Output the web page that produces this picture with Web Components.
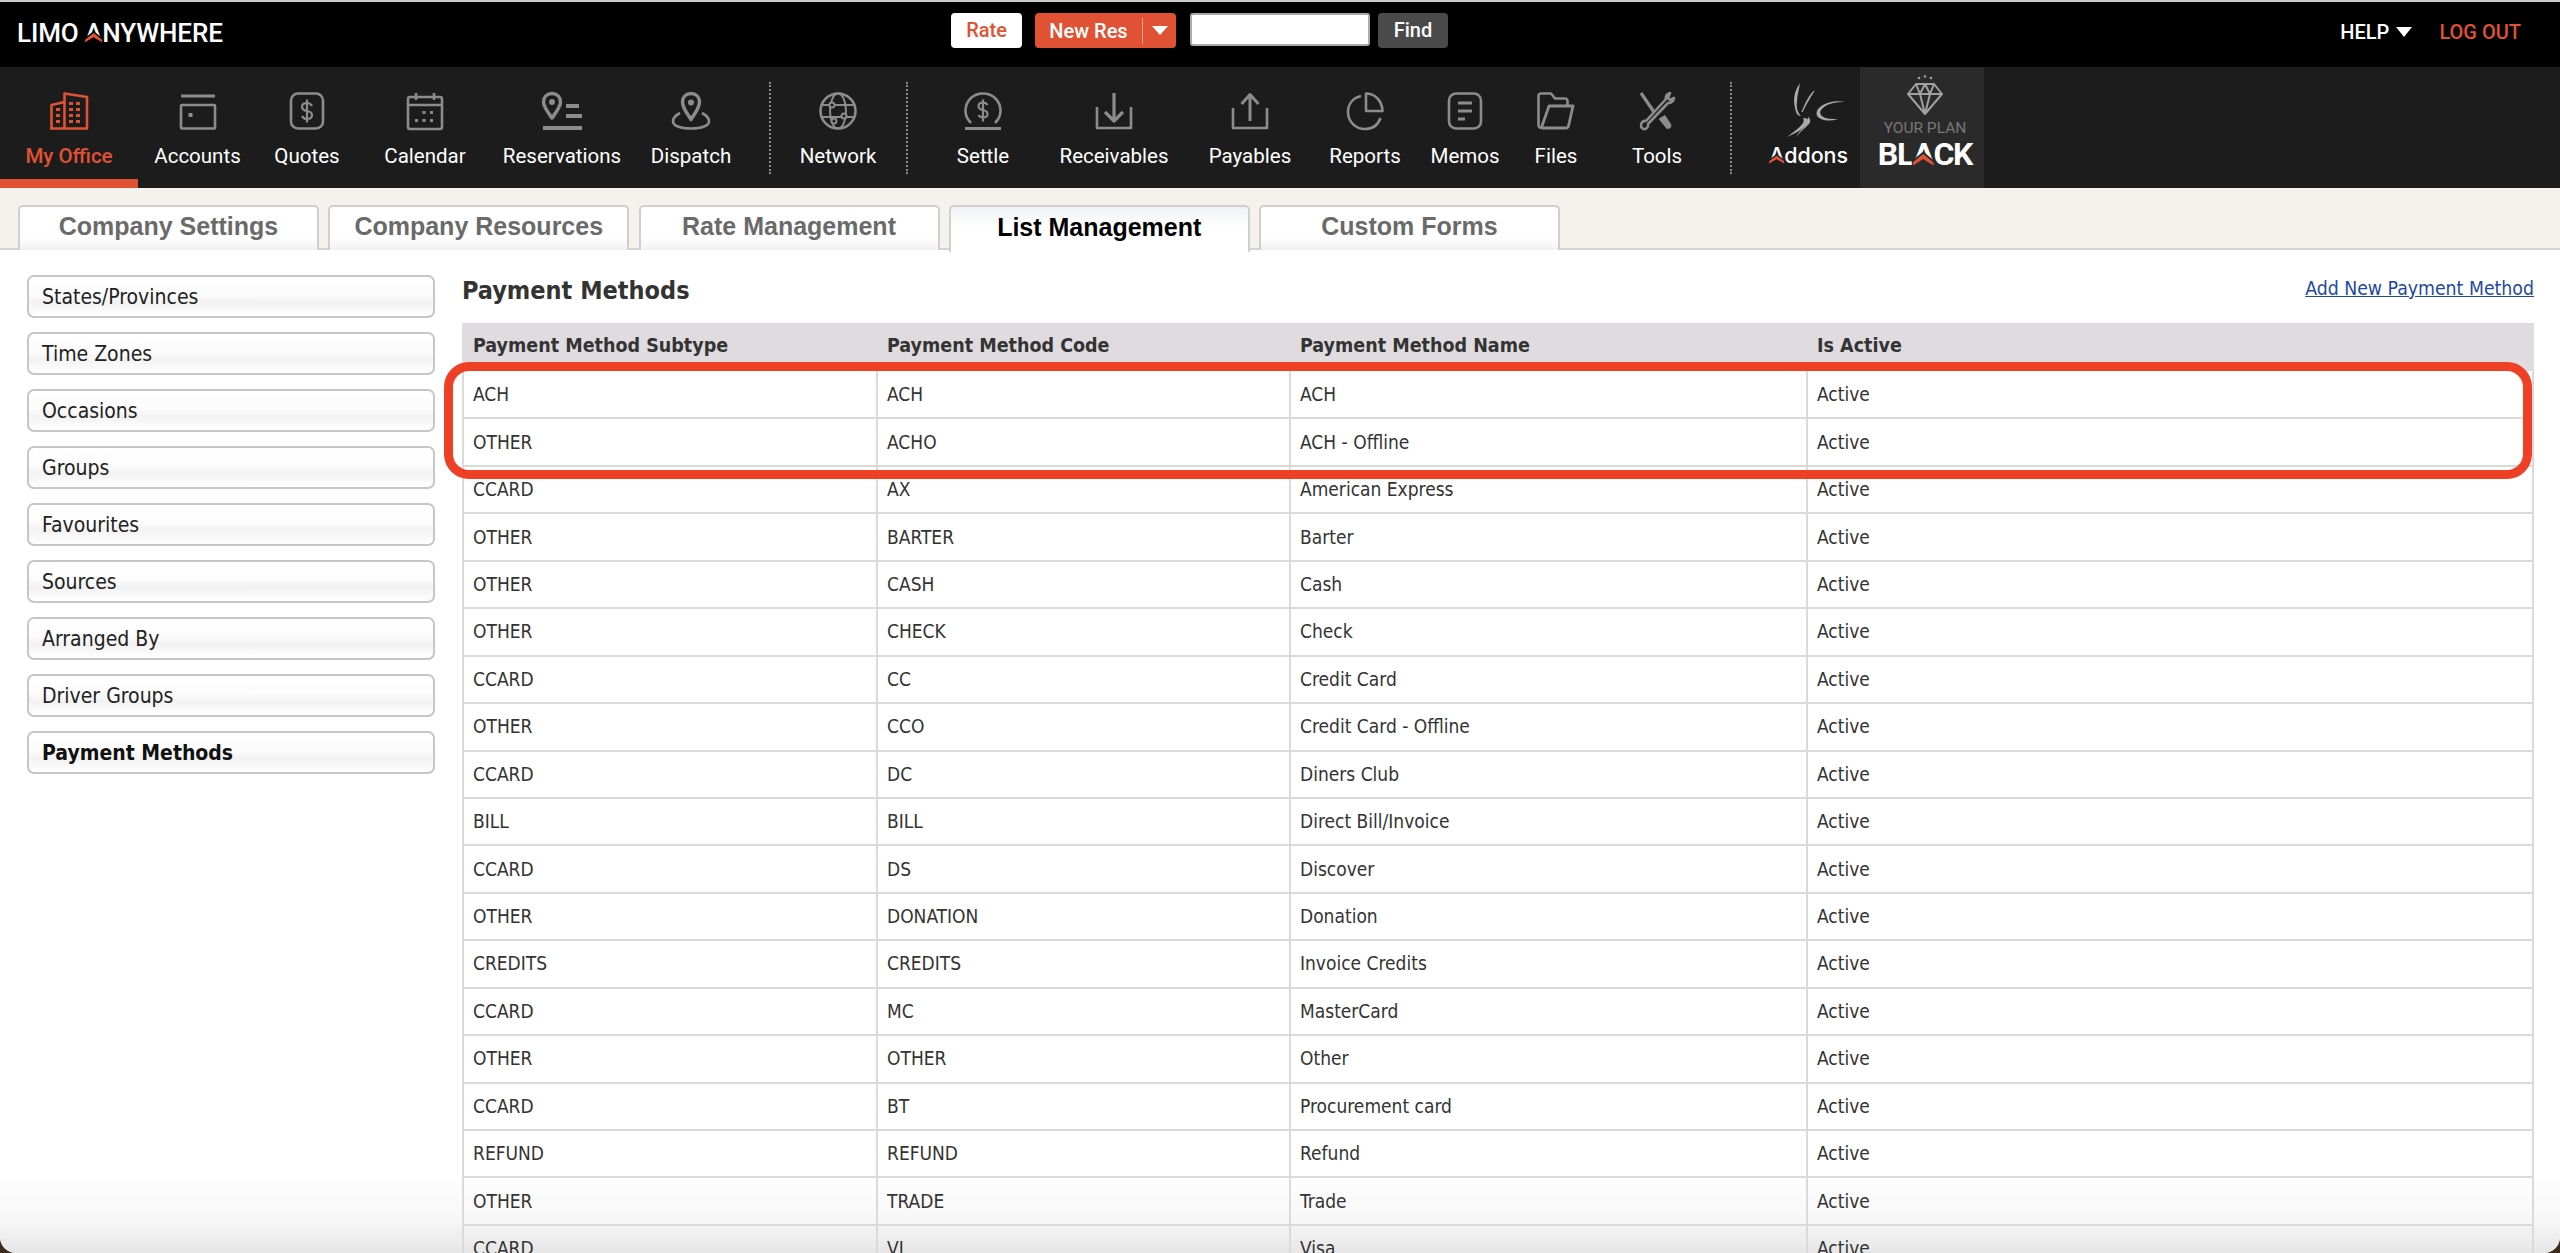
<!DOCTYPE html>
<html lang="en"><head><meta charset="utf-8"><title>Payment Methods</title>
<style>
html,body{margin:0;height:100%;overflow:hidden;background:#3f2a1e}
body{font-family:"DejaVu Sans",sans-serif}
</style></head><body>
<la-app></la-app>
<script>
const def=(n,html,init)=>customElements.define(n,class extends HTMLElement{
  constructor(){super();this.attachShadow({mode:'open'}).innerHTML=html;}
  connectedCallback(){if(init)init.call(this,this.shadowRoot);}
});
const ICONS={
office:`<path d="M1.5 36.5V13l13-3M14.5 36.5V1.5L37 5v31.5M0 36.5h38"/><g fill="currentColor" stroke="none"><rect x="6" y="16" width="4" height="3"/><rect x="6" y="22" width="4" height="3"/><rect x="6" y="28" width="4" height="3"/><rect x="19" y="10" width="4" height="3"/><rect x="26" y="10" width="4" height="3"/><rect x="19" y="16" width="4" height="3"/><rect x="26" y="16" width="4" height="3"/><rect x="19" y="22" width="4" height="3"/><rect x="26" y="22" width="4" height="3"/><rect x="19" y="28" width="4" height="3"/><rect x="26" y="28" width="4" height="3"/></g>`,
accounts:`<path d="M2 4h34" stroke-width="3"/><rect x="2" y="13" width="34" height="23.5" rx="1"/><rect x="9.500" y="21" width="4" height="4" fill="currentColor" stroke="none"/>`,
quotes:`<rect x="3" y="1.500" width="32" height="35" rx="7"/><path d="M24 14c-1-2-3-3-5-3-3 0-5 1.500-5 4s2 3.500 5 4 5 1.500 5 4-2 4-5 4c-2 0-4-1-5-3M19 7.500v23" stroke-width="2.200"/>`,
calendar:`<rect x="2" y="5" width="34" height="32" rx="2"/><path d="M2 13h34M10 1v7M28 1v7"/><g fill="currentColor" stroke="none"><rect x="16.500" y="19" width="3" height="3"/><rect x="24" y="19" width="3" height="3"/><rect x="9" y="27" width="3" height="3"/><rect x="16.500" y="27" width="3" height="3"/><rect x="24" y="27" width="3" height="3"/></g>`,
reservations:`<path d="M10 1.500c-5 0-8.500 3.500-8.500 8.500 0 5 5 11 8.500 16 3.500-5 8.500-11 8.500-16 0-5-3.500-8.500-8.500-8.500z" stroke-width="3.500"/><circle cx="10" cy="10" r="3" fill="currentColor" stroke="none"/><path d="M24 14h13M24 24h16M1 36h39" stroke-width="4"/>`,
dispatch:`<path d="M20 1.500c-5 0-8.500 3.500-8.500 8.500 0 6 5 12 8.500 17.500 3.500-5.500 8.500-11.500 8.500-17.500 0-5-3.500-8.500-8.500-8.500z" stroke-width="3.500"/><circle cx="20" cy="10.500" r="3" fill="currentColor" stroke="none"/><path d="M9 21c-4 2-7 5-7 8.500 0 4 7 7 18 7s18-3 18-7c0-3.500-3-6.500-7-8.500"/>`,
network:`<circle cx="19" cy="19" r="17.500"/><ellipse cx="19" cy="19" rx="8" ry="17.500" stroke-width="2"/><path d="M2 13h34M2 25h34" stroke-width="2"/><circle cx="13" cy="13" r="2.500" fill="#1c1c1c" stroke-width="2"/><circle cx="25" cy="24" r="2.500" fill="#1c1c1c" stroke-width="2"/><circle cx="15" cy="29" r="2.500" fill="#1c1c1c" stroke-width="2"/>`,
settle:`<path d="M7 31C3.500 27.500 1.500 23.500 1.500 19 1.500 9 9 1.500 19 1.500S36.500 9 36.500 19c0 4.500-2 8.500-5.500 12"/><path d="M23.500 13c-1-1.800-2.500-2.500-4.500-2.500-2.700 0-4.500 1.300-4.500 3.700s2 3.300 4.500 3.800 4.500 1.500 4.500 3.800-2 3.700-4.500 3.700c-2 0-3.500-.8-4.500-2.500M19 7.500v22"  stroke-width="2.200"/><path d="M1 36.500h36" stroke-width="3"/>`,
receivables:`<path d="M2 15v21h34V15"/><path d="M19 1v27M10 20l9 9 9-9" stroke-width="3.200"/>`,
payables:`<path d="M2 16v20h34V16"/><path d="M19 29V3M10.500 12L19 2.500 27.500 12" stroke-width="3"/>`,
reports:`<path d="M15 4C7 6 2 12 2 20c0 9.500 7.500 17 17 17 7.500 0 13-4 15.500-11"/><path d="M20 1.500c8 0 16 6 16.500 17.500H20z"/>`,
memos:`<rect x="3" y="1.500" width="32" height="35" rx="7"/><path d="M12 11h14M12 19h14M12 27h7" stroke-width="3"/>`,
files:`<path d="M5 36c-2 0-3.500-1-3.500-3V4c0-1.500 1-2.500 2.500-2.500h10l4 5h10c1.500 0 2.500 1 2.500 2.500v4"/><path d="M4.500 35.500 12 14h24l-4.500 20c-.3 1.300-1 2-2.500 2H5" stroke-width="2.800"/>`,
tools:`<path d="M3 1 16 20M22 26l8 10" stroke-width="3.200"/><path d="M22 26l5-3 6 9c1 2 0 4-1.500 4.500-1.500.7-3 0-4-1.500z" fill="currentColor" stroke="none"/><path d="M32 1c-3 .5-4.500 3-4 6L8 29c-3-.5-5 1.500-5 4.500 0 2.500 2 4 4 3.500s3.500-2.500 3-5L30 11c3 .5 5.500-2 6-5l-4 2-2-2z" stroke-width="2.600"/>`
};
def('la-brand-a',`<style>
:host{display:inline-block;position:relative;line-height:1}
svg{position:absolute;left:0;top:0;width:100%;height:1em;overflow:visible}
</style><slot></slot><svg viewBox="0 0 100 100" preserveAspectRatio="none"><polygon fill="var(--brand-bg,#000)" points="-6,92 -6,72 50,42 106,72 106,92"/><polygon fill="#e05233" points="0,86 0,76 50,50 100,76 100,86 50,66"/></svg>`);
def('la-logo',`<style>
:host{display:block;font:500 26px/1 Roboto,sans-serif;color:#fff;letter-spacing:-.1px;white-space:nowrap}
</style>LIMO&nbsp;<la-brand-a style="--brand-bg:#000">A</la-brand-a>NYWHERE`);
def('la-top-actions',`<style>
:host{display:flex;align-items:flex-start;font:500 20px/35px Roboto,sans-serif}
.b{height:35px;border-radius:4px;display:flex;align-items:center;justify-content:center;box-sizing:border-box}
.rate{width:71px;background:#fff;color:#e05233}
.new{width:141px;margin-left:13px;background:#e05233;color:#fff;}
.new span{width:108px;text-align:center;border-right:1px solid #f0a08e;height:26px;line-height:26px;box-sizing:border-box}
.new i{flex:1;display:flex;justify-content:center}
.tri{width:0;height:0;border:8px solid transparent;border-top:9px solid #fff;border-bottom:0}
.in{display:block;width:180px;height:33px;margin-left:14px;background:#fff;border:2px solid #aaa;border-radius:3px;box-sizing:border-box;padding:0}
.find{width:70px;margin-left:8px;background:#4a4a4a;color:#fff}
</style><div class="b rate">Rate</div><div class="b new"><span>New Res</span><i><b class="tri"></b></i></div><input class="in" aria-label="Find"><div class="b find">Find</div>`);
def('la-top-links',`<style>
:host{display:flex;align-items:center;font:500 20px/1 Roboto,sans-serif;color:#fff;white-space:nowrap}
.tri{width:0;height:0;border:8.500px solid transparent;border-top:10px solid #fff;border-bottom:0;margin-left:7px}
.out{color:#e05233;margin-left:27px}
</style>HELP<span class="tri"></span><span class="out">LOG OUT</span>`);
def('la-topbar',`<style>
:host{display:grid;grid-template-columns:951px 1fr auto;height:65px;background:#000;border-top:2px solid #c9c9c9;box-sizing:content-box}
.l{padding:18px 0 0 17px}.c{padding-top:11px}.r{padding:20px 39px 0 0}
</style><div class="l"><la-logo></la-logo></div><div class="c"><la-top-actions></la-top-actions></div><div class="r"><la-top-links></la-top-links></div>`);
customElements.define('la-nav-item',class extends HTMLElement{
  constructor(){super();this.attachShadow({mode:'open'});}
  connectedCallback(){
    const w=this.getAttribute('w'),ic=this.getAttribute('icon'),vw=this.getAttribute('vw')||38;
    const active=this.hasAttribute('active');
    this.shadowRoot.innerHTML=`<style>
:host{display:flex;flex-direction:column;align-items:center;box-sizing:border-box;height:121px;width:${w}px;padding-top:25px;color:#8c8c8c;position:relative}
svg{width:${vw}px;height:38px;display:block;fill:none;stroke:currentColor;stroke-width:2.600;stroke-linejoin:round;stroke-linecap:butt;overflow:visible}
.t{margin-top:15px;font:400 20.500px/23px Roboto,sans-serif;color:#fff;white-space:nowrap}
:host([active]){color:#e05233}:host([active]) .t{color:#e05233;font-weight:500}
.bar{position:absolute;left:0;right:0;bottom:0;height:9px;background:#e05233;display:${active?'block':'none'}}
</style><svg viewBox="0 0 ${vw} 38">${ICONS[ic]}</svg><div class="t"><slot></slot></div><div class="bar"></div>`;
  }
});
customElements.define('la-nav-sep',class extends HTMLElement{
  constructor(){super();this.attachShadow({mode:'open'});}
  connectedCallback(){this.shadowRoot.innerHTML=`<style>
:host{display:flex;justify-content:center;align-items:flex-start;width:${this.getAttribute('w')}px;height:121px;padding-top:15px;box-sizing:border-box}
i{display:block;width:0;height:92px;border-left:2px dotted #8a8a8a}
</style><i></i>`;}
});
def('la-addons',`<style>
:host{display:flex;flex-direction:column;align-items:center;width:111px;height:121px;box-sizing:border-box;padding:16px 0 0 8px;color:#aaa}
svg{width:58px;height:54px;display:block;margin-left:14px}
.t{font:500 21.500px/24px Inter,sans-serif;color:#fff;margin-top:6px;--brand-bg:#1c1c1c;letter-spacing:-.1px}
</style><svg viewBox="0 0 58 54"><g fill="currentColor"><path d="M13 0C6 10 6 18 9 29c1 3 3 4 5 4-3-3-5-8-4-14 0-6 2-12 3-19z"/><path d="M27 8c-5 5-8 11-12 21 3-6 7-13 12-21z" stroke="currentColor" stroke-width="1"/><path d="M58 19c-9-2-20 0-26 6-4 4-3 9 2 11 5 2 11 2 17 0-6 0-13 0-16-3-3-3-2-6 2-9 5-4 13-5 21-5z"/><path d="M16 35c4 0 6 1 5 4-2 4-7 9-21 15 6-5 13-9 16-14 1-2 1-4 0-5z"/><path d="M21 34c3 2 3 5 0 8-3 3-8 7-12 12 3-6 8-9 10-13 1-2 2-5 2-7z"/></g></svg><div class="t"><la-brand-a>A</la-brand-a>ddons</div>`);
def('la-plan',`<style>
:host{display:flex;flex-direction:column;align-items:center;width:124px;height:121px;box-sizing:border-box;background:#2a2a2a;padding:8px 0 0 6px;color:#a0a0a0}
svg{width:36px;height:40px;display:block;fill:none;stroke:currentColor;stroke-width:2;stroke-linejoin:round}
.y{font:400 15.500px/16px Roboto,sans-serif;color:#777;margin-top:5px;white-space:nowrap}
.b{font:700 32px/34px Roboto,sans-serif;color:#fff;margin-top:1px;letter-spacing:-1.2px;--brand-bg:#2a2a2a;white-space:nowrap}
</style><svg viewBox="0 0 36 40"><g fill="currentColor" stroke="none"><circle cx="12" cy="3" r="1.300"/><circle cx="18" cy="1.500" r="1.300"/><circle cx="24" cy="3" r="1.300"/></g><path d="M9 9h18l8 10-17 20L1 19zM1 19h34M9 9l4 10 5 20 5-20 4-10M13 19l5-10 5 10"/></svg><div class="y">YOUR PLAN</div><div class="b">BL<la-brand-a>A</la-brand-a>CK</div>`);
def('la-nav',`<style>
:host{display:flex;height:121px;background:#1c1c1c;box-shadow:0 1px 2px rgba(0,0,0,.45);position:relative}
</style><slot></slot>`);
customElements.define('la-tab',class extends HTMLElement{
  constructor(){super();this.attachShadow({mode:'open'}).innerHTML=`<style>
:host{display:flex;align-items:center;justify-content:center;box-sizing:border-box;width:301px;height:45px;margin-bottom:-1px;border:2px solid #cfcfcf;border-bottom:0;border-radius:5px 5px 0 0;background:linear-gradient(#fff 0,#fff 70%,#f1f1f1 100%);font:700 25px/1 "Liberation Sans",sans-serif;color:#6a6a6a;padding-bottom:4px;white-space:nowrap}
:host([active]){color:#000;background:linear-gradient(#f0f2f3,#fff 45%);height:47px;margin-bottom:-2px;position:relative;z-index:1}
</style><slot></slot>`;}
});
def('la-tabs',`<style>
:host{display:flex;gap:9.250px;height:62px;box-sizing:border-box;padding:17px 0 0 18px;background:#f5f2ed;border-bottom:2px solid #d4d4d4;position:relative}
::slotted(la-tab){align-self:flex-start}
</style><slot></slot>`);
customElements.define('la-side-item',class extends HTMLElement{
  constructor(){super();this.attachShadow({mode:'open'}).innerHTML=`<style>
:host{display:flex;align-items:center;box-sizing:border-box;height:43px;padding:1px 0 0 13px;border:2px solid #c6c6c6;border-radius:7px;background:linear-gradient(#fff 0,#fcfcfc 45%,#f2f2f2 65%,#fff 100%);font:400 21px/1 "DejaVu Sans",sans-serif;font-stretch:condensed;color:#222;white-space:nowrap}
:host([active]){font-weight:700;color:#111}
</style><slot></slot>`;}
});
def('la-side-menu',`<style>
:host{display:flex;flex-direction:column;gap:14px;width:408px;padding:25px 0 0 27px;margin-right:27px;flex:none}
</style><slot></slot>`);
customElements.define('la-method-table',class extends HTMLElement{
  constructor(){super();this.attachShadow({mode:'open'});}
  connectedCallback(){
    const rows=[['ACH','ACH','ACH'],['OTHER','ACHO','ACH - Offline'],['CCARD','AX','American Express'],['OTHER','BARTER','Barter'],['OTHER','CASH','Cash'],['OTHER','CHECK','Check'],['CCARD','CC','Credit Card'],['OTHER','CCO','Credit Card - Offline'],['CCARD','DC','Diners Club'],['BILL','BILL','Direct Bill/Invoice'],['CCARD','DS','Discover'],['OTHER','DONATION','Donation'],['CREDITS','CREDITS','Invoice Credits'],['CCARD','MC','MasterCard'],['OTHER','OTHER','Other'],['CCARD','BT','Procurement card'],['REFUND','REFUND','Refund'],['OTHER','TRADE','Trade'],['CCARD','VI','Visa']];
    const cell=c=>`<td>${c}</td>`;
    this.shadowRoot.innerHTML=`<style>
:host{display:block;position:relative;font:400 19px/1 "DejaVu Sans",sans-serif;font-stretch:condensed;color:#333}
table{width:2072px;table-layout:fixed;border-collapse:collapse;border:2px solid #dcdcdc;border-top:0}
col.a{width:414px}col.b{width:413px}col.c{width:517px}
th{height:48px;box-sizing:border-box;background:#dfdbdf;text-align:left;padding:0 0 3px 9px;font-weight:700;font-size:19.500px;color:#333;border-left:2px solid #dfdbdf}
td{height:47.450px;box-sizing:border-box;padding:0 0 0 9px;border:2px solid #dadada;border-top:0}
th,td{white-space:nowrap}
</style><table><colgroup><col class="a"><col class="b"><col class="c"><col></colgroup>
<thead><tr><th>Payment Method Subtype</th><th>Payment Method Code</th><th>Payment Method Name</th><th>Is Active</th></tr></thead>
<tbody>${rows.map(r=>`<tr>${r.map(cell).join('')}<td>Active</td></tr>`).join('')}</tbody></table><slot></slot>`;
  }
});
def('la-callout',`<style>
:host{position:absolute;left:-18px;top:39px;width:2088px;height:117px;box-sizing:border-box;border:9px solid #ee4025;border-radius:25px;pointer-events:none}
</style>`);
def('la-content-head',`<style>
:host{display:flex;justify-content:space-between;align-items:flex-start;height:47px;width:2072px;font-family:"DejaVu Sans",sans-serif;font-stretch:condensed}
h2{margin:0;font:700 25px/30px "DejaVu Sans",sans-serif;font-stretch:condensed;color:#333}
a{font-size:19.300px;line-height:26px;color:#1f4a9e;text-decoration:underline}
</style><h2><slot name="title"></slot></h2><a href="#"><slot name="link"></slot></a>`);
def('la-main',`<style>
:host{display:block;flex:1;padding-top:26px;position:relative;z-index:1}
</style><slot></slot>`);
def('la-vignette',`<style>
:host{position:absolute;left:0;right:0;bottom:0;height:80px;background:linear-gradient(rgba(228,228,228,0),rgba(228,228,228,.3) 60%,#e6e6e6);z-index:0}
</style>`);
def('la-app',`<style>
:host{display:block;height:1253px;overflow:hidden;background:#fff;position:relative;border-radius:0 0 16px 16px}
.body{display:flex;position:relative;z-index:1}
</style>
<la-topbar></la-topbar>
<la-nav>
<la-nav-item w="138" icon="office" active>My Office</la-nav-item>
<la-nav-item w="119" icon="accounts">Accounts</la-nav-item>
<la-nav-item w="100" icon="quotes">Quotes</la-nav-item>
<la-nav-item w="136" icon="calendar">Calendar</la-nav-item>
<la-nav-item w="138" icon="reservations" vw="41">Reservations</la-nav-item>
<la-nav-item w="120" icon="dispatch" vw="40">Dispatch</la-nav-item>
<la-nav-sep w="38"></la-nav-sep>
<la-nav-item w="98" icon="network">Network</la-nav-item>
<la-nav-sep w="40"></la-nav-sep>
<la-nav-item w="112" icon="settle">Settle</la-nav-item>
<la-nav-item w="150" icon="receivables">Receivables</la-nav-item>
<la-nav-item w="122" icon="payables">Payables</la-nav-item>
<la-nav-item w="108" icon="reports">Reports</la-nav-item>
<la-nav-item w="92" icon="memos">Memos</la-nav-item>
<la-nav-item w="90" icon="files">Files</la-nav-item>
<la-nav-item w="112" icon="tools">Tools</la-nav-item>
<la-nav-sep w="36"></la-nav-sep>
<la-addons></la-addons>
<la-plan></la-plan>
</la-nav>
<la-tabs><la-tab>Company Settings</la-tab><la-tab>Company Resources</la-tab><la-tab>Rate Management</la-tab><la-tab active>List Management</la-tab><la-tab>Custom Forms</la-tab></la-tabs>
<la-vignette></la-vignette>
<div class="body">
<la-side-menu>
<la-side-item>States/Provinces</la-side-item><la-side-item>Time Zones</la-side-item><la-side-item>Occasions</la-side-item><la-side-item>Groups</la-side-item><la-side-item>Favourites</la-side-item><la-side-item>Sources</la-side-item><la-side-item>Arranged By</la-side-item><la-side-item>Driver Groups</la-side-item><la-side-item active>Payment Methods</la-side-item>
</la-side-menu>
<la-main><la-content-head><span slot="title">Payment Methods</span><span slot="link">Add New Payment Method</span></la-content-head>
<la-method-table><la-callout></la-callout></la-method-table></la-main>
</div>`);
</script>
</body></html>
